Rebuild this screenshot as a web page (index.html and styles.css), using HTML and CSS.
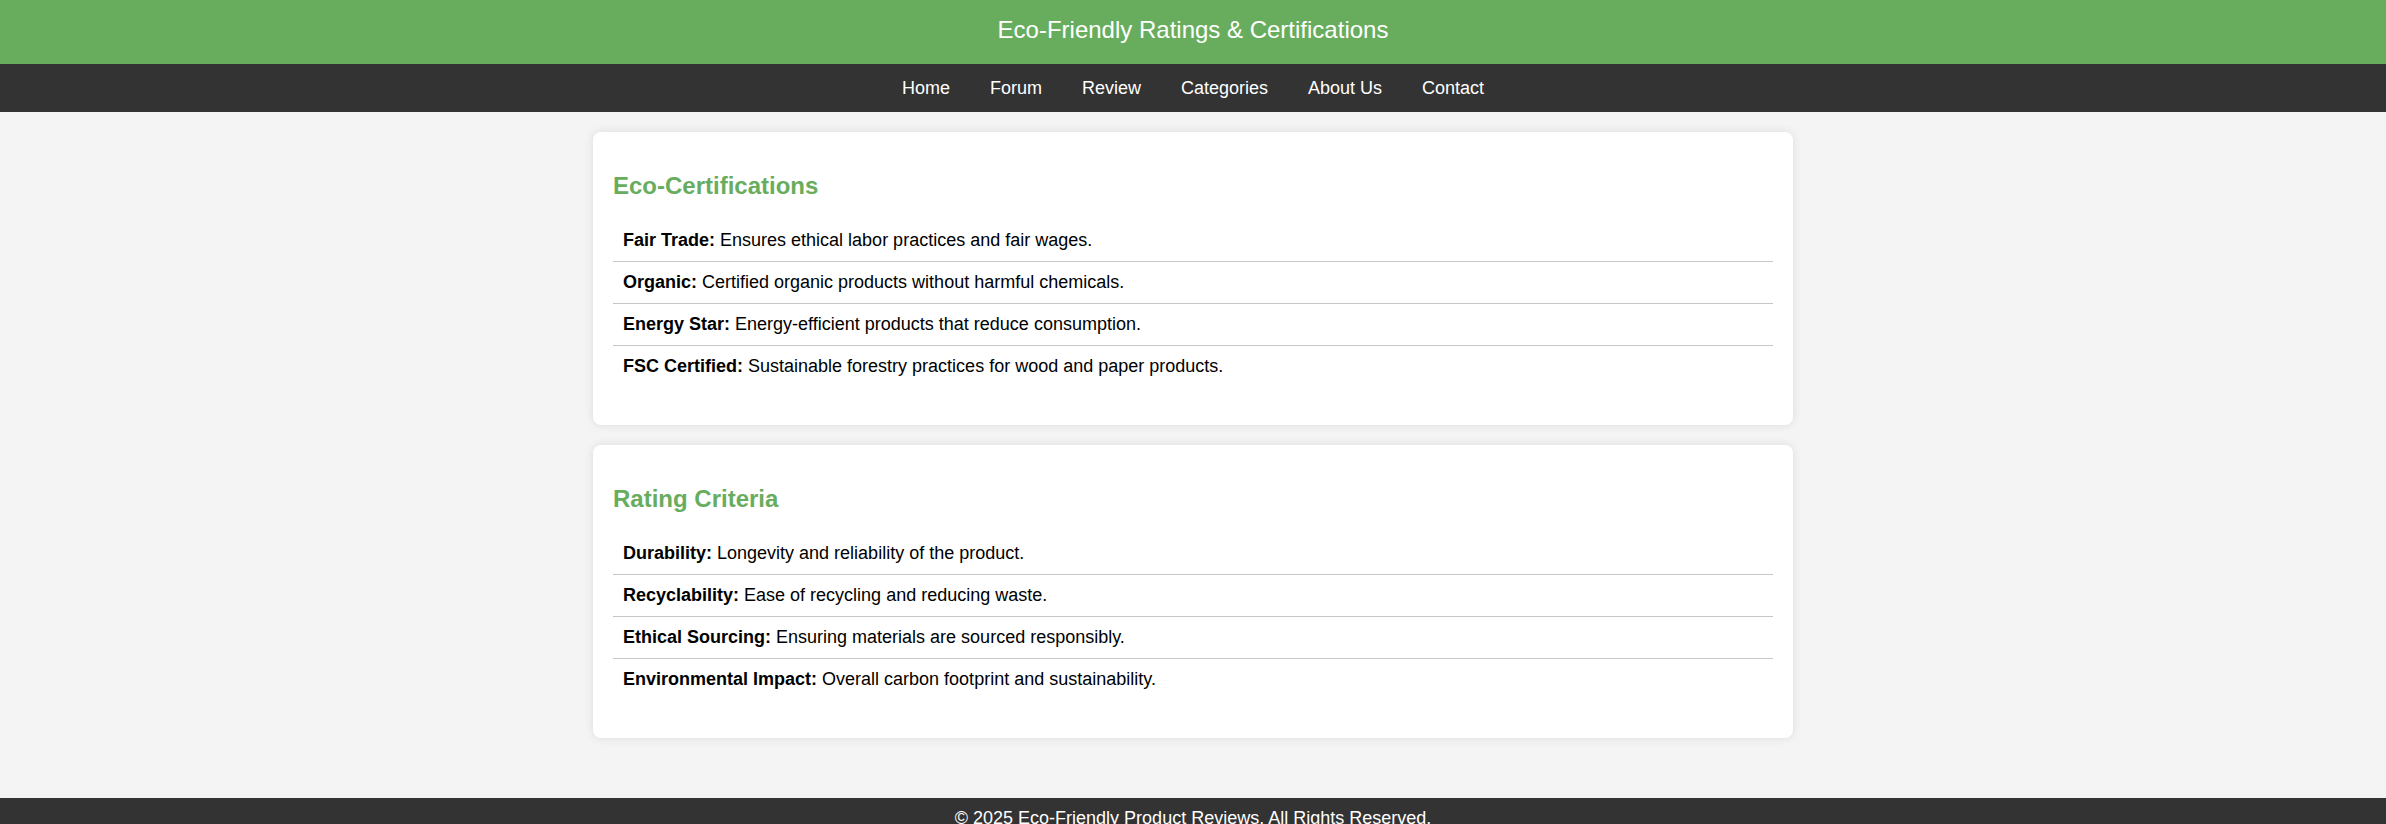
FILE: index.html
```html
<!DOCTYPE html>
<html lang="en">
<head>
<meta charset="utf-8">
<title>Eco-Friendly Ratings &amp; Certifications</title>
<link rel="stylesheet" href="styles.css">
</head>
<body>
<header class="site-header">
  <h1 class="site-title">Eco-Friendly Ratings &amp; Certifications</h1>
</header>
<nav class="site-nav">
  <a href="#">Home</a>
  <a href="#">Forum</a>
  <a href="#">Review</a>
  <a href="#">Categories</a>
  <a href="#">About Us</a>
  <a href="#">Contact</a>
</nav>
<main class="content">
  <section class="card">
    <h2 class="card-title">Eco-Certifications</h2>
    <ul class="item-list">
      <li><strong>Fair Trade:</strong> Ensures ethical labor practices and fair wages.</li>
      <li><strong>Organic:</strong> Certified organic products without harmful chemicals.</li>
      <li><strong>Energy Star:</strong> Energy-efficient products that reduce consumption.</li>
      <li><strong>FSC Certified:</strong> Sustainable forestry practices for wood and paper products.</li>
    </ul>
  </section>
  <section class="card">
    <h2 class="card-title">Rating Criteria</h2>
    <ul class="item-list">
      <li><strong>Durability:</strong> Longevity and reliability of the product.</li>
      <li><strong>Recyclability:</strong> Ease of recycling and reducing waste.</li>
      <li><strong>Ethical Sourcing:</strong> Ensuring materials are sourced responsibly.</li>
      <li><strong>Environmental Impact:</strong> Overall carbon footprint and sustainability.</li>
    </ul>
  </section>
</main>
<footer class="site-footer">
  <p class="footer-text">&copy; 2025 Eco-Friendly Product Reviews. All Rights Reserved.</p>
</footer>
</body>
</html>
```
FILE: styles.css
```css
* {
  box-sizing: border-box;
}

body {
  margin: 0;
  background: #f4f4f4;
  font-family: "Liberation Sans", Arial, sans-serif;
  font-size: 18px;
  color: #000;
}

.site-header {
  background: #68ad5e;
  color: #fff;
  text-align: center;
  padding: 16px 0 20px;
}

.site-title {
  margin: 0;
  font-size: 24px;
  font-weight: normal;
  line-height: 28px;
}

.site-nav {
  background: #333;
  height: 48px;
  display: flex;
  justify-content: center;
  align-items: center;
}

.site-nav a {
  color: #fff;
  text-decoration: none;
  font-size: 18px;
  padding: 0 20px;
}

.content {
  max-width: 1200px;
  margin: 0 auto;
  padding: 20px 0 60px;
  display: flex;
  flex-direction: column;
  gap: 20px;
}

.card {
  background: #fff;
  border-radius: 8px;
  box-shadow: 0 0 10px rgba(0, 0, 0, 0.1);
  padding: 20px;
}

.card-title {
  color: #68ad5e;
  font-size: 24px;
  font-weight: bold;
  margin: 20px 0;
}

.item-list {
  list-style: none;
  padding: 0;
  margin: 20px 0 18px;
}

.item-list li {
  padding: 10px;
  border-bottom: 1px solid #c6c6c6;
}

.item-list li:last-child {
  border-bottom: none;
}

.site-footer {
  background: #333;
  color: #fff;
  text-align: center;
  padding: 10px 0;
}

.footer-text {
  margin: 0;
}
```
